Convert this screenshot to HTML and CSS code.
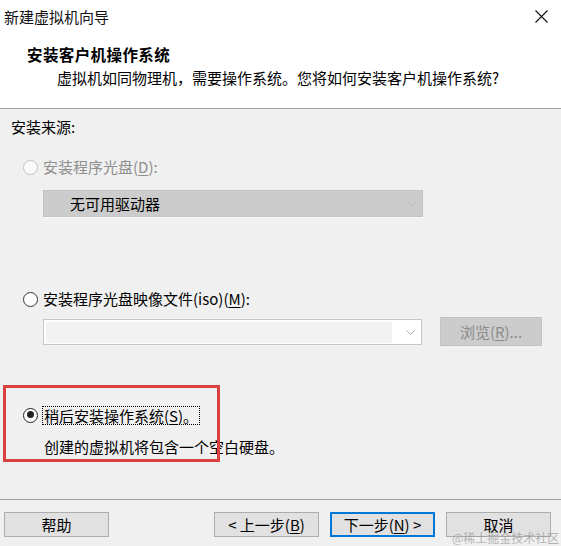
FILE: index.html
```html
<!DOCTYPE html>
<html lang="zh-CN">
<head>
<meta charset="utf-8">
<title>新建虚拟机向导</title>
<link rel="stylesheet" href="styles.css">
</head>
<body>
<div class="window">
  <div class="titlebar">
    <span class="title">新建虚拟机向导</span>
    <svg class="close" width="13" height="13" viewBox="0 0 13 13"><path d="M0.5 0.5 L12.5 12.5 M12.5 0.5 L0.5 12.5" stroke="#111" stroke-width="1.1" fill="none"/></svg>
  </div>
  <div class="header">
    <div class="heading">安装客户机操作系统</div>
    <div class="subtext">虚拟机如同物理机，需要操作系统。您将如何安装客户机操作系统?</div>
  </div>
  <div class="content">
    <div class="section-label">安装来源:</div>
    <div class="radio-row row-disc disabled">
      <span class="radio"></span>
      <span class="label">安装程序光盘(<u>D</u>):</span>
    </div>
    <div class="dropdown">
      <span class="dropdown-text">无可用驱动器</span>
      <svg class="chevron" width="9" height="5" viewBox="0 0 9 5"><path d="M0.5 0.5 L4.5 4.5 L8.5 0.5" stroke="#b4b4b4" fill="none"/></svg>
    </div>
    <div class="radio-row row-iso">
      <span class="radio"></span>
      <span class="label">安装程序光盘映像文件(iso)(<u>M</u>):</span>
    </div>
    <div class="iso-row">
      <div class="combo">
        <div class="combo-edit"></div>
        <svg class="chevron" width="9" height="5" viewBox="0 0 9 5"><path d="M0.5 0.5 L4.5 4.5 L8.5 0.5" stroke="#a8a8a8" fill="none"/></svg>
      </div>
      <div class="btn browse">浏览(<u>R</u>)...</div>
    </div>
    <div class="radio-row row-later">
      <span class="radio checked"></span>
      <span class="label focus">稍后安装操作系统(<u>S</u>)。</span>
    </div>
    <div class="desc">创建的虚拟机将包含一个空白硬盘。</div>
    <div class="highlight"></div>
  </div>
  <div class="footer">
    <div class="btn help">帮助</div>
    <div class="nav">
      <div class="btn">&lt; 上一步(<u>B</u>)</div>
      <div class="btn default">下一步(<u>N</u>) &gt;</div>
      <div class="btn">取消</div>
    </div>
  </div>
  <div class="watermark">@稀土掘金技术社区</div>
</div>
</body>
</html>
```
FILE: styles.css
```css
* { box-sizing: border-box; }
html, body { margin: 0; padding: 0; }
body {
  width: 561px;
  height: 546px;
  overflow: hidden;
  font-family: "Noto Sans CJK SC", "Noto Sans", sans-serif;
  font-size: 15px;
  color: #000;
  background: #f0f0f0;
}
u { text-decoration: underline; text-underline-offset: 2px; text-decoration-thickness: 1px; }

.window { position: relative; width: 561px; height: 546px; }

.titlebar {
  height: 33px;
  background: #fff;
  display: flex;
  align-items: center;
  justify-content: space-between;
  padding: 0 13px 0 4px;
  line-height: 20px;
}
.title { color: #111; }
.close { display: block; margin-top: -1px; }

.header {
  background: #fff;
  padding: 11px 0 20px 0;
  border-bottom: 1px solid #a0a0a0;
  line-height: 20px;
}
.heading { padding-left: 27px; font-weight: bold; font-size: 15.5px; letter-spacing: 0.4px; }
.subtext { padding-left: 57px; margin-top: 4px; }

.content {
  position: relative;
  height: 390px;
  padding-top: 8px;
  line-height: 20px;
}
.section-label { padding-left: 11px; }

.radio-row {
  display: flex;
  align-items: center;
  height: 20px;
  padding-left: 23px;
  gap: 5px;
}
.radio {
  width: 15px;
  height: 15px;
  border: 1px solid #333;
  border-radius: 50%;
  background: #fff;
  position: relative;
  flex: none;
}
.radio.checked { border-width: 1.5px; border-color: #222; }
.radio.checked::after {
  content: "";
  position: absolute;
  left: 2.5px;
  top: 2.5px;
  width: 7px;
  height: 7px;
  border-radius: 50%;
  background: #222;
}
.disabled .radio { border-color: #c2c2c2; background: #fbfbfb; }
.disabled .label { color: #8e8e8e; }

.row-disc { margin-top: 20px; }
.row-iso { margin-top: 72px; }
.row-later { margin-top: 59px; gap: 4px; }

.dropdown {
  margin: 13px 0 0 43px;
  width: 380px;
  height: 27px;
  background: #cccccc;
  border: 1px solid #c3c3c3;
  box-shadow: 0 1px 0 #fafafa;
  display: flex;
  align-items: center;
  justify-content: space-between;
  padding: 0 6px 0 26px;
}
.chevron { display: block; }

.iso-row {
  margin: 8px 0 0 43px;
  height: 29px;
  display: flex;
  align-items: center;
  gap: 18px;
}
.combo {
  width: 379px;
  height: 26px;
  background: #fff;
  border: 1px solid #c6c6c6;
  display: flex;
  align-items: center;
  padding: 2px 6px 1px 2px;
  gap: 14px;
}
.combo-edit {
  flex: 1;
  height: 100%;
  background: #f2f2f2;
}

.btn {
  width: 105px;
  height: 25px;
  background: #e1e1e1;
  border: 1px solid #adadad;
  display: flex;
  align-items: center;
  justify-content: center;
  line-height: 20px;
}
.browse {
  width: 102px;
  height: 29px;
  background: #cccccc;
  border-color: #c2c2c2;
  color: #8a8a8a;
}

.focus {
  border: 1px dotted #000;
  line-height: 17px;
  height: 19px;
  padding: 0 1px;
  margin-top: 1px;
}

.desc { margin: 12px 0 0 44px; }

.highlight {
  position: absolute;
  left: 3px;
  top: 276px;
  width: 217px;
  height: 77px;
  border: 3px solid #dc4141;
  pointer-events: none;
}

.footer {
  height: 47px;
  border-top: 1px solid #a0a0a0;
  padding: 12px 10px 0 4px;
  display: flex;
  align-items: flex-start;
  justify-content: space-between;
}
.nav { display: flex; gap: 11px; }
.btn.default { border: 2px solid #0078d7; }

.watermark {
  position: absolute;
  left: 452px;
  top: 531px;
  font-size: 12px;
  line-height: 14px;
  color: rgba(150, 150, 150, 0.7);
  white-space: nowrap;
}
```
